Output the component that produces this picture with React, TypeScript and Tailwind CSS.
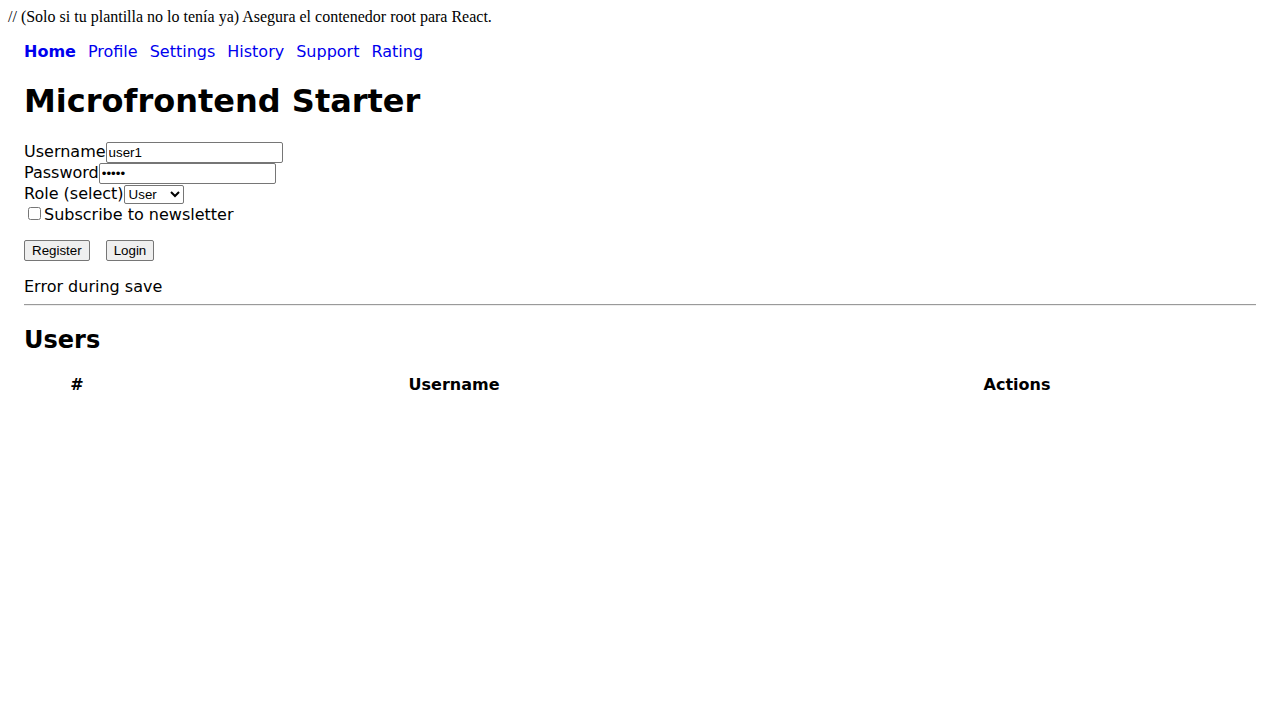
export default function App() {
  const nav = ["Home", "Profile", "Settings", "History", "Support", "Rating"];

  const field =
    "w-[177px] h-[21px] px-[2px] py-px border border-[#767676] rounded-[2px] font-['Liberation_Sans',sans-serif] text-[13.33px] leading-[normal]";
  const btn =
    "h-[21px] px-[7px] py-px bg-[#efefef] border border-[#767676] rounded-[2px] font-['Liberation_Sans',sans-serif] text-[13.33px] leading-[normal]";

  return (
    <div className="p-2 bg-white text-black min-h-[720px] leading-[normal]">
      <div className="font-['Liberation_Serif',serif] text-[16px]">
        // (Solo si tu plantilla no lo tenía ya) Asegura el contenedor root para React.
      </div>

      <div className="p-4 font-['DejaVu_Sans',sans-serif] text-[16px]">
        <nav className="flex gap-3">
          {nav.map((item, i) => (
            <a
              key={item}
              href="#"
              className={`text-[#0000ee] ${i === 0 ? "font-bold" : ""}`}
            >
              {item}
            </a>
          ))}
        </nav>

        <h1 className="text-[32px] font-bold my-[21.44px]">Microfrontend Starter</h1>

        <form>
          <div>
            <label>
              Username
              <input type="text" defaultValue="user1" className={field} />
            </label>
          </div>
          <div>
            <label>
              Password
              <input type="password" defaultValue="12345" className={field} />
            </label>
          </div>
          <div>
            <label>
              Role (select)
              <select className="w-[60px] h-[19px] border border-[#767676] rounded-[2px] bg-white font-['Liberation_Sans',sans-serif] text-[13.33px] leading-[normal]">
                <option>User</option>
                <option>Admin</option>
              </select>
            </label>
          </div>
          <div>
            <label>
              <input type="checkbox" className="w-[13px] h-[13px] mt-[3px] mr-[3px] mb-[3px] ml-[4px]" />
              Subscribe to newsletter
            </label>
          </div>

          <div className="flex gap-4 mt-4">
            <button type="button" className={btn}>
              Register
            </button>
            <button type="button" className={btn}>
              Login
            </button>
          </div>
        </form>

        <div className="mt-4">Error during save</div>
        <hr className="my-2 border-t border-t-[#9a9a9a] border-b border-b-[#eeeeee]" />

        <h2 className="text-[24px] font-bold my-[19.92px]">Users</h2>

        <table className="w-full border-separate border-spacing-0">
          <thead>
            <tr>
              <th className="w-[106px] p-px text-center font-bold">#</th>
              <th className="w-[648px] p-px text-center font-bold">Username</th>
              <th className="p-px text-center font-bold">Actions</th>
            </tr>
          </thead>
          <tbody></tbody>
        </table>
      </div>
    </div>
  );
}
